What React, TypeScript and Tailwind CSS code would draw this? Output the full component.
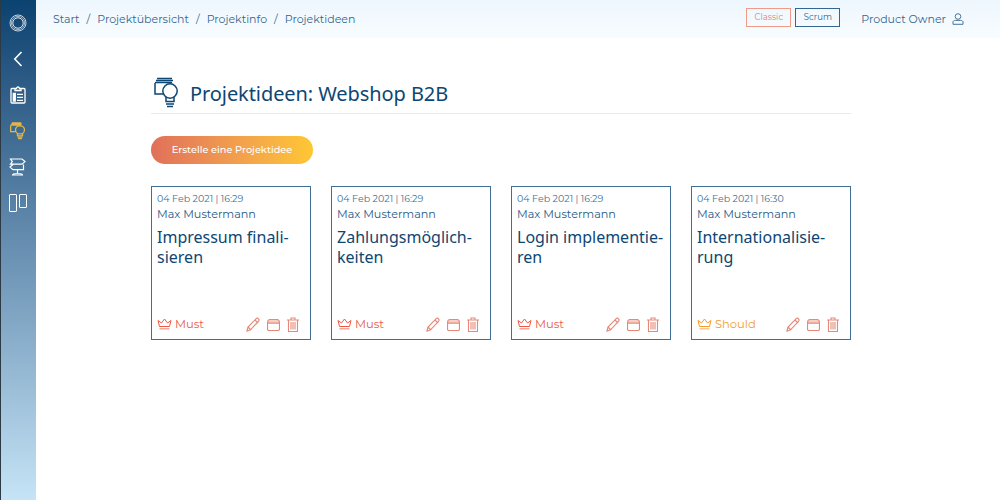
import React from "react";

const body = "font-['Montserrat','Inter','Noto_Sans',sans-serif]";

function Logo() {
  return (
    <svg width="18" height="18" viewBox="0 0 18 18" fill="none" stroke="#fff">
      <circle cx="9" cy="9" r="8" strokeWidth="1" opacity="0.75" />
      <circle cx="9" cy="9" r="6.6" strokeWidth="1" opacity="0.6" />
      <circle cx="9" cy="9" r="5.200" strokeWidth="1" opacity="0.85" />
    </svg>
  );
}

function Bulb({ stroke, w, h, sw }: { stroke: string; w: number; h: number; sw: number }) {
  return (
    <svg width={w} height={h} viewBox="0 0 24 32" fill="none" stroke={stroke} strokeWidth={sw} preserveAspectRatio="none">
      <path d="M3 1.500h15M2 3.500h17M1 5.500h17" />
      <path d="M9 17H1V6" />
      <circle cx="16" cy="14" r="7.200" fill="none" />
      <path d="M12 20v4.500h8V20M12 27h8M13 29.500h6" />
    </svg>
  );
}

function Crown({ c }: { c: string }) {
  return (
    <svg width="15" height="12" viewBox="0 0 15 12" fill="none" stroke={c} strokeWidth="1">
      <path d="M2.500 8.500 1 2.500l3.500 2.500L7.500 1l3 4L14 2.500l-1.500 6z" />
      <path d="M2.500 10.800h10" strokeWidth="1.400" opacity="0.6" />
    </svg>
  );
}

function Actions() {
  const c = "#e58a78";
  return (
    <div className="flex items-center">
      <svg width="15" height="15" viewBox="0 0 15 15" fill="none" stroke={c} strokeWidth="1.150">
        <path d="M1 14l1-4 8-8.200c.8-.7 1.800-.7 2.500 0s.7 1.700 0 2.500L4.500 12.800z" />
        <path d="M9 3l3 3M2 10l3 3" />
      </svg>
      <svg className="ml-[6px] mt-[2px]" width="13" height="12" viewBox="0 0 13 12" fill="none" stroke={c} strokeWidth="1.150">
        <path d="M.5 4V10c0 .8.500 1.500 1.500 1.500h9c1 0 1.500-.7 1.500-1.500V4z" />
        <path d="M.5 4c0-2 1-3.500 2.500-3.500h7c1.500 0 2.500 1.500 2.500 3.500z" fill="#f5d0c7" />
      </svg>
      <svg className="ml-[7px]" width="12" height="15" viewBox="0 0 12 15" fill="none" stroke={c} strokeWidth="1.100">
        <path d="M0 3h12M4 3V1h4v2M1.500 3v11.500h9V3M4 5v7.500M6 5v7.500M8 5v7.500" />
      </svg>
    </div>
  );
}

const cards = [
  { d: "04 Feb 2021 | 16:29", t: ["Impressum finali-", "sieren"], p: "Must" },
  { d: "04 Feb 2021 | 16:29", t: ["Zahlungsmöglich-", "keiten"], p: "Must" },
  { d: "04 Feb 2021 | 16:29", t: ["Login implementie-", "ren"], p: "Must" },
  { d: "04 Feb 2021 | 16:30", t: ["Internationalisie-", "rung"], p: "Should" },
];

function Rail({ children }: { children: React.ReactNode }) {
  return <div className="flex h-9 w-full items-center justify-center">{children}</div>;
}

export default function App() {
  return (
    <div className={`flex h-[500px] w-[1000px] overflow-hidden bg-white ${body}`}>
      <aside className="flex h-full w-9 flex-col border-l border-[#2b3a44] bg-gradient-to-b from-[#0a4270] to-[#c6e4f6] pr-[2px] pt-[5px]">
        <Rail><Logo /></Rail>
        <Rail>
          <svg width="10" height="16" viewBox="0 0 10 16" fill="none" stroke="#fff" strokeWidth="1.600">
            <path d="M8.500 1 1.800 8l6.700 7" />
          </svg>
        </Rail>
        <Rail>
          <svg width="16" height="18" viewBox="0 0 16 18" fill="none" stroke="#fff" strokeWidth="1.300">
            <path d="M5 2.500H2a1 1 0 0 0-1 1V16a1 1 0 0 0 1 1h12a1 1 0 0 0 1-1V3.500a1 1 0 0 0-1-1h-3M5 4.500h6v-2H9.500a1.500 1.500 0 0 0-3 0H5z" />
            <path d="M3.300 7.500h2v1.500h-2zM3.300 10.500h2V12h-2zM3.300 13.500h2V15h-2zM7 8.300h6M7 11.300h6M7 14.300h6" />
          </svg>
        </Rail>
        <Rail><Bulb stroke="#e3b747" w={15} h={18} sw={2.100} /></Rail>
        <Rail>
          <svg width="17" height="18" viewBox="0 0 17 18" fill="none" stroke="#fff" strokeWidth="1.200">
            <path d="M1.500 1H13l3 2.600L13 6.200H1.500l1.800-2.600zM14.500 6.500v5.200H4L1 9.100l3-2.600M8.500 11.700V15.500M3.500 17c0-1 1.500-1.500 5-1.500s5 .5 5 1.500z" />
          </svg>
        </Rail>
        <Rail>
          <div className="flex h-[18px] items-start gap-[2px]">
            <div className="h-[18px] w-[8px] rounded-[1px] border-[1.500px] border-white" />
            <div className="h-[14px] w-[8px] rounded-[1px] border-[1.500px] border-white" />
          </div>
        </Rail>
      </aside>

      <div className="flex min-w-0 flex-1 flex-col">
        <header className="flex h-[38px] shrink-0 items-center justify-between bg-gradient-to-b from-[#eef7fe] to-[#f8fcff] pl-[17px] pr-[36px] text-[#35668f]">
          <nav className="flex items-center gap-[7px] text-[11px]">
            <span>Start</span><span>/</span>
            <span>Projektübersicht</span><span>/</span>
            <span>Projektinfo</span><span>/</span>
            <span>Projektideen</span>
          </nav>
          <div className="flex items-center">
            <span className="mb-[4px] flex h-[19px] w-[45px] items-center justify-center border border-[#ef9b88] text-[8.500px] text-[#ea7d68]">Classic</span>
            <span className="mb-[4px] ml-[4px] flex h-[19px] w-[45px] items-center justify-center border border-[#35668f] text-[8.500px]">Scrum</span>
            <span className="ml-[21px] text-[11px]">Product Owner</span>
            <svg className="ml-[6px]" width="12" height="12" viewBox="0 0 12 12" fill="none" stroke="#35668f" strokeWidth="0.900">
              <circle cx="6" cy="3.500" r="2.800" />
              <path d="M1 11.300V9c0-1 1-1.600 2.500-1.600h5C10 7.400 11 8 11 9v2.300z" />
            </svg>
          </div>
        </header>

        <main className="flex flex-col pl-[115px] pr-[149px] pt-[36px]">
          <div className="flex h-[40px] items-center gap-[12px] border-b border-[#e3ebef] pl-[3px]">
            <div className="mb-[2px]"><Bulb stroke="#0e4672" w={24} h={32} sw={1.500} /></div>
            <h1 className="font-['Noto_Sans',sans-serif] text-[20px] tracking-[-0.08px] text-[#0e4672]">Projektideen: Webshop B2B</h1>
          </div>
          <button className="mt-[22px] h-[28px] w-[162px] rounded-full bg-gradient-to-r from-[#e0705a] to-[#ffc733] text-[9.800px] font-medium text-white">
            Erstelle eine Projektidee
          </button>
          <div className="mt-[22px] grid grid-cols-4 gap-[20px]">
            {cards.map((c) => (
              <div key={c.t[0]} className="flex h-[154px] flex-col border border-[#3f6e96] px-[5px] pb-[6px] pt-[5px]">
                <div className="text-[9.500px] leading-[13px] text-[#41708f]">{c.d}</div>
                <div className="mt-[2px] text-[11.200px] leading-[15px] text-[#1f5a87]">Max Mustermann</div>
                <div className="mt-[5px] whitespace-nowrap font-['Noto_Sans',sans-serif] text-[16px] leading-[20px] text-[#0e4672]">
                  {c.t[0]}<br />{c.t[1]}
                </div>
                <div className="mt-auto flex items-center justify-between pr-[6px]">
                  <div className={`flex items-center gap-[3px] text-[11.500px] ${c.p === "Must" ? "text-[#ea5a47]" : "text-[#f39a2e]"}`}>
                    <Crown c={c.p === "Must" ? "#ea5a47" : "#f39a2e"} />
                    {c.p}
                  </div>
                  <Actions />
                </div>
              </div>
            ))}
          </div>
        </main>
      </div>
    </div>
  );
}
